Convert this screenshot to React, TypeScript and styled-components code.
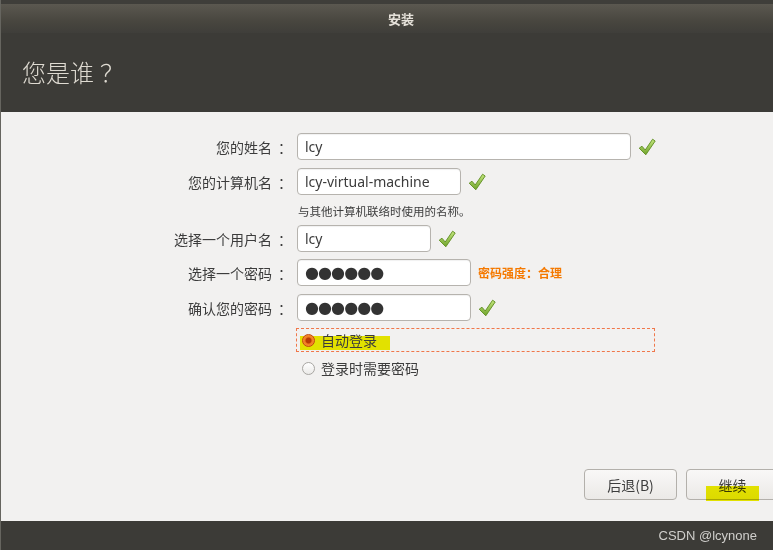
import React from 'react';
import styled, { createGlobalStyle } from 'styled-components';

const GlobalStyle = createGlobalStyle`
  html, body {
    margin: 0;
    padding: 0;
    background: #3c3b37;
  }
  * {
    box-sizing: border-box;
  }
`

const CJK = `"Noto Sans CJK SC", "Noto Sans", sans-serif`
const LATIN = `"Noto Sans", "Noto Sans CJK SC", sans-serif`

const Window = styled.div`
  width: 773px;
  height: 550px;
  display: flex;
  flex-direction: column;
  overflow: hidden;
  background: #3c3b37;
  border-left: 1px solid #66655f;
  font-family: ${CJK};
`

// full-width punctuation, nudged toward the middle of its cell
const Punct = styled.span<{ $w: number; $pad: number }>`
  display: inline-block;
  width: ${p => p.$w}px;
  padding-left: ${p => p.$pad}px;
  white-space: nowrap;
`

const TopStrip = styled.div`
  height: 4px;
  background: #3f3e3a;
`

const TitleBar = styled.div`
  height: 29px;
  display: flex;
  align-items: center;
  justify-content: center;
  background: linear-gradient(to bottom, #5b5850 0%, #48463f 60%, #3f3e3a 100%);
  color: #e6e2da;
  font-size: 13px;
  font-weight: 700;
  padding-left: 28px;
`

const Header = styled.div`
  height: 79px;
  display: flex;
  align-items: center;
  padding-left: 21px;
  padding-bottom: 2px;
  background: #3c3b37;
  color: #dfdbd2;
  font-size: 24px;
  font-weight: 300;
`

const Content = styled.div`
  flex: 1;
  display: flex;
  flex-direction: column;
  background: #f2f1f0;
  padding-top: 21px;
  padding-bottom: 21px;
  color: #3c3c3c;
`

const Row = styled.div<{ $gap?: number }>`
  display: flex;
  align-items: center;
  height: 27px;
  margin-top: ${p => p.$gap ?? 0}px;
`

const Label = styled.div`
  width: 291px;
  margin-right: 5px;
  display: flex;
  justify-content: flex-end;
  font-size: 14px;
  color: #3c3c3c;
`

const Field = styled.div<{ $w: number }>`
  width: ${p => p.$w}px;
  height: 27px;
  display: flex;
  align-items: center;
  padding-left: 7px;
  background: #ffffff;
  border: 1px solid #b6b3ae;
  border-radius: 4px;
  box-shadow: inset 0 1px 1px rgba(0, 0, 0, 0.06);
  font-family: ${LATIN};
  font-size: 14px;
  color: #3c3c3c;
`

const Dots = styled.span`
  font-family: "DejaVu Sans", sans-serif;
  font-size: 16px;
  letter-spacing: -0.9px;
  color: #333333;
`

const Side = styled.div`
  margin-left: 7px;
  display: flex;
  align-items: center;
`

const Strength = styled.span`
  font-size: 12px;
  font-weight: 700;
  color: #f57900;
`

const Hint = styled.div`
  margin-left: 297px;
  margin-top: 8px;
  margin-bottom: 6px;
  font-size: 11.5px;
  line-height: 16px;
  color: #3c3c3c;
`

const RadioBox = styled.div`
  margin-left: 295px;
  margin-top: 7px;
  width: 359px;
  height: 24px;
  border: 1px dashed #f0774a;
  display: flex;
  align-items: center;
  padding-left: 5px;
  position: relative;
`

const RadioRow = styled.div`
  margin-left: 296px;
  margin-top: 4px;
  height: 24px;
  display: flex;
  align-items: center;
  padding-left: 5px;
`

const RadioDot = styled.span<{ $on?: boolean }>`
  width: 13px;
  height: 13px;
  border-radius: 50%;
  margin-right: 6px;
  position: relative;
  z-index: 1;
  border: 1px solid ${p => (p.$on ? '#c2470a' : '#a8a6a2')};
  background: ${p =>
    p.$on
      ? 'radial-gradient(circle at 50% 50%, #b83a05 0 2.5px, #f07a1e 3.5px, #f9a04a 100%)'
      : 'linear-gradient(#ffffff, #ebeae8)'};
`

const RadioText = styled.span`
  font-size: 14px;
  color: #3c3c3c;
  position: relative;
  z-index: 1;
`

const Marker = styled.span<{ $w: number; $h: number }>`
  position: absolute;
  width: ${p => p.$w}px;
  height: ${p => p.$h}px;
  background: #efef00;
  mix-blend-mode: multiply;
  pointer-events: none;
`

const Buttons = styled.div`
  margin-top: auto;
  display: flex;
  justify-content: flex-end;
  gap: 9px;
  margin-right: -6px;
`

const Button = styled.div`
  position: relative;
  width: 93px;
  height: 31px;
  display: flex;
  align-items: center;
  justify-content: center;
  border: 1px solid #b3b0ab;
  border-radius: 4px;
  background: linear-gradient(to bottom, #f9f8f7, #ebe9e7);
  font-size: 14px;
  color: #3c3c3c;
`

const Footer = styled.div`
  height: 29px;
  display: flex;
  align-items: center;
  justify-content: flex-end;
  padding-right: 16px;
  background: #3c3b37;
  color: #d0cfcc;
  font-family: "Liberation Sans", Arial, sans-serif;
  font-size: 13px;
`

const Check = () => (
  <svg width="18" height="18" viewBox="0 0 18 18">
    <defs>
      <linearGradient id="chk" x1="0" y1="0" x2="0" y2="1">
        <stop offset="0" stopColor="#c4e67e" />
        <stop offset="1" stopColor="#6fa32a" />
      </linearGradient>
    </defs>
    <path
      d="M1.2 10.2 L4 8.2 L7.2 12 L14.6 1.2 L17.2 3 L7.8 16.8 Z"
      fill="url(#chk)"
      stroke="#5c8c1e"
      strokeWidth="0.9"
      strokeLinejoin="round"
    />
  </svg>
)

const FormLabel = ({ text }: { text: string }) => (
  <Label>
    <span>{text}</span>
    <Punct $w={20} $pad={6}>：</Punct>
  </Label>
)

export default function App() {
  return (
    <>
      <GlobalStyle />
      <Window>
        <TopStrip />
        <TitleBar>安装</TitleBar>
        <Header>
          您是谁<Punct $w={26} $pad={6}>？</Punct>
        </Header>
        <Content>
          <Row>
            <FormLabel text="您的姓名" />
            <Field $w={334}>lcy</Field>
            <Side><Check /></Side>
          </Row>
          <Row $gap={8}>
            <FormLabel text="您的计算机名" />
            <Field $w={164}>lcy-virtual-machine</Field>
            <Side><Check /></Side>
          </Row>
          <Hint>与其他计算机联络时使用的名称。</Hint>
          <Row>
            <FormLabel text="选择一个用户名" />
            <Field $w={134}>lcy</Field>
            <Side><Check /></Side>
          </Row>
          <Row $gap={7}>
            <FormLabel text="选择一个密码" />
            <Field $w={174}><Dots>●●●●●●</Dots></Field>
            <Side>
              <Strength>密码强度：合理</Strength>
            </Side>
          </Row>
          <Row $gap={8}>
            <FormLabel text="确认您的密码" />
            <Field $w={174}><Dots>●●●●●●</Dots></Field>
            <Side><Check /></Side>
          </Row>
          <RadioBox>
            <Marker $w={90} $h={14} style={{ left: 3, top: 7 }} />
            <RadioDot $on />
            <RadioText>自动登录</RadioText>
          </RadioBox>
          <RadioRow>
            <RadioDot />
            <RadioText>登录时需要密码</RadioText>
          </RadioRow>
          <Buttons>
            <Button>后退(B)</Button>
            <Button>
              <Marker $w={53} $h={15} style={{ left: 19, top: 16 }} />
              继续
            </Button>
          </Buttons>
        </Content>
        <Footer>CSDN @lcynone</Footer>
      </Window>
    </>
  );
}
